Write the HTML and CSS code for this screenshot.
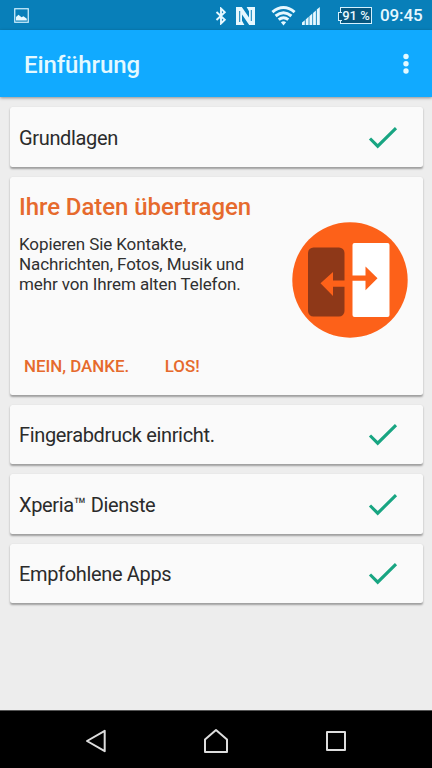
FILE: index.html
```html
<!DOCTYPE html>
<html lang="de">
<head>
<meta charset="utf-8">
<title>Einführung</title>
<link rel="stylesheet" href="styles.css">
</head>
<body>
<svg class="symbols" width="0" height="0">
  <symbol id="check" viewBox="0 0 30 24"><path d="M2 12.5L9.7 20.2L28 2.2" fill="none" stroke="#18a582" stroke-width="3.1"/></symbol>
</svg>
<div class="screen">
  <div class="status">
    <svg class="picture" width="15" height="15" viewBox="0 0 15 15"><rect x=".75" y=".75" width="13.5" height="13.5" fill="none" stroke="#d5f2ff" stroke-width="1.2"/><path d="M2 12.5V9L4.5 6.8L7.5 9.3L9.5 8.3L12.8 10.8V12.5Z" fill="#e8f9ff"/></svg>
    <svg class="bluetooth" width="12" height="18" viewBox="0 0 12 18"><path d="M1.5 5L9.8 12.8L6 16.5V1.5L9.8 5.2L1.5 13" fill="none" stroke="#e6f8ff" stroke-width="1.9"/></svg>
    <svg class="nfc" width="19" height="18" viewBox="0 0 19 18"><path d="M0 0H5.8L13 10.4V4.2L10.6 0H19V18H13.2L6 7.6V13.8L8.4 18H0Z" fill="#e6f8ff"/><path d="M3.7 4V15M15.3 14V3" fill="none" stroke="#087fb9" stroke-width="1"/></svg>
    <svg class="wifi" width="25" height="20" viewBox="0 0 25 20"><g fill="none" stroke="#e6f8ff" stroke-width="3"><path d="M1.4 6.1Q12.5-3 23.6 6.1"/><path d="M4.6 10Q12.5 3.5 20.4 10"/><path d="M7.7 13.7Q12.5 9.8 17.3 13.7"/></g><path d="M9.9 16.3Q12.5 14.2 15.1 16.3L12.5 19.5Z" fill="#e6f8ff"/></svg>
    <svg class="signal" width="18" height="18" viewBox="0 0 18 18"><g fill="#e6f8ff"><path d="M0 15.6L2.8 13.2V18H0Z"/><path d="M3.7 12.4L6.6 9.8V18H3.7Z"/><path d="M7.4 9.2L10.3 6.6V18H7.4Z"/><path d="M11.1 6L13.9 3.5V18H11.1Z"/><path d="M14.8 2.6L17.8 0V18H14.8Z"/></g></svg>
    <div class="battery">91 %</div>
    <span class="clock">09:45</span>
  </div>
  <header class="bar">
    <h1>Einführung</h1>
    <svg width="6" height="22" viewBox="0 0 6 22"><g fill="#e4f9ff"><circle cx="3" cy="3.5" r="2.7"/><circle cx="3" cy="10.8" r="2.7"/><circle cx="3" cy="18" r="2.7"/></g></svg>
  </header>
  <main class="content">
    <section class="card row"><span>Grundlagen</span><svg class="check"><use href="#check"/></svg></section>
    <section class="card transfer">
      <h2>Ihre Daten übertragen</h2>
      <div class="details">
        <p>Kopieren Sie Kontakte,<br>Nachrichten, Fotos, Musik und<br>mehr von Ihrem alten Telefon.</p>
        <svg class="phones" width="116" height="116" viewBox="0 0 116 116"><circle cx="58" cy="58" r="57.7" fill="#fd6119"/><rect x="16" y="25.5" width="36.5" height="69" rx="5.5" fill="#8e3818"/><rect x="60.5" y="21" width="37" height="74" rx="2" fill="#fff"/><path d="M28.5 61.2L41 50V58.5H53V64.8H41V74Z" fill="#fd6119"/><path d="M53 58.8V53.5H73.5V44.5L85.5 56.3L73.5 68.2V58.8Z" fill="#fd6119"/></svg>
      </div>
      <div class="actions"><span>NEIN, DANKE.</span><span>LOS!</span></div>
    </section>
    <section class="card row"><span>Fingerabdruck einricht.</span><svg class="check"><use href="#check"/></svg></section>
    <section class="card row"><span>Xperia™ Dienste</span><svg class="check"><use href="#check"/></svg></section>
    <section class="card row"><span>Empfohlene Apps</span><svg class="check"><use href="#check"/></svg></section>
  </main>
  <nav class="nav">
    <svg width="24" height="26" viewBox="0 0 24 26"><path d="M3 13L20.7 2.8V23.2Z"/></svg>
    <svg width="26" height="26" viewBox="0 0 26 26"><path d="M2 24V11.5L13 2L24 11.5V24Z"/></svg>
    <svg width="24" height="24" viewBox="0 0 24 24"><path d="M3 3H21V21H3Z"/></svg>
  </nav>
</div>
</body>
</html>
```
FILE: styles.css
```css
* { box-sizing: border-box; }
body { margin: 0; font-family: Roboto, sans-serif; background: #ededed; }
svg { display: block; flex: none; }
.symbols { position: absolute; }
.screen { width: 432px; height: 768px; display: flex; flex-direction: column; overflow: hidden; }
.status { height: 30px; flex: none; display: flex; align-items: center; padding: 1px 9px 0 14px; background: #087fb9; color: #e6f8ff; }
.bluetooth { margin-left: auto; }
.nfc { margin-left: 9px; }
.wifi { margin-left: 16px; }
.signal { margin-left: 6px; }
.battery { position: relative; width: 32px; height: 17px; margin-left: 20px; border: 1px solid #d5f2ff; background: #07577f; font-size: 13px; line-height: 15px; text-align: center; white-space: nowrap; font-weight: 500; }
.battery::before { content: ""; position: absolute; left: -3px; top: 4px; width: 3px; height: 7px; border: 1px solid #d5f2ff; border-right: 0; background: #07577f; }
.clock { width: 43px; margin-left: 8px; font-size: 17px; font-weight: 500; white-space: nowrap; line-height: 29px; letter-spacing: -.1px; }
.bar { height: 67px; flex: none; display: flex; align-items: center; justify-content: space-between; padding: 0 23.5px 0 24px; background: #11aaff; box-shadow: 0 1px 3px #0006; }
h1 { margin: 2px 0 0; font-size: 24px; font-weight: 500; line-height: 30px; color: #e4f9ff; letter-spacing: -.1px; }
.content { flex: 1; display: flex; flex-direction: column; gap: 10px; padding: 10px 9.5px 0; }
.card { flex: none; background: #fafafa; border-radius: 2.5px; box-shadow: 0 1.5px 2px #0005; }
.row { height: 59.5px; display: flex; align-items: center; justify-content: space-between; padding: 2px 24.5px 0 9.5px; font-size: 20px; letter-spacing: -.34px; color: #2b2b2b; }
.check { width: 30px; height: 24px; }
.transfer { height: 218px; padding: 15px 14.5px 0 9.5px; }
h2 { margin: 0; font-size: 24px; line-height: 30px; font-weight: 500; letter-spacing: -.07px; color: #e66a2d; }
.details { display: flex; justify-content: space-between; }
.details p { margin: 12px 0 0; font-size: 17px; line-height: 20px; letter-spacing: -.1px; color: #303030; white-space: nowrap; }
.actions { display: flex; gap: 35.5px; margin: 18.5px 0 0 5px; font-size: 16.9px; line-height: 20px; font-weight: 500; color: #e66a2d; }
.nav { height: 58px; flex: none; display: flex; align-items: center; justify-content: space-between; padding: 3px 84px 0; background: #000; border-top: 1px solid #555; }
.nav path { fill: none; stroke: #ddd; stroke-width: 2; stroke-linejoin: round; }
```
